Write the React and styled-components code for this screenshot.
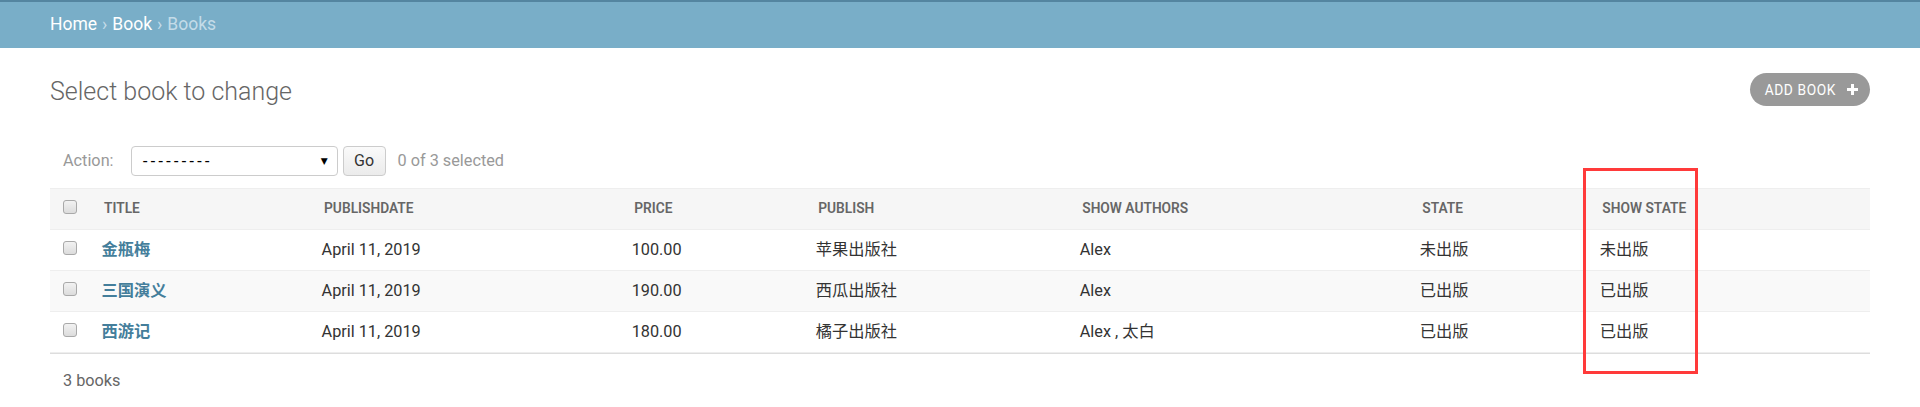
import React from "react";
import styled, { createGlobalStyle } from "styled-components";

const Global = createGlobalStyle`
  html, body { margin: 0; padding: 0; background: #fff; }
  body {
    font-family: Roboto, "Noto Sans CJK SC", "Lucida Grande", Verdana, Arial, sans-serif;
    font-size: 16.25px;
    color: #333;
  }
  * { box-sizing: border-box; }
`;

const Page = styled.div`
  position: relative;
  width: 1920px;
  min-height: 407px;
`;

const Breadcrumbs = styled.div`
  height: 48px;
  border-top: 2px solid #5485a0;
  background: #79aec8;
  padding: 0 50px;
  line-height: 45px;
  font-size: 17.5px;
  color: #c4dce8;
  display: flex;
  gap: 5px;
`;

const Crumb = styled.a`
  color: ${(p) => (p.$current ? "#c4dce8" : "#fff")};
  text-decoration: none;
`;

const Sep = styled.span`
  color: #c4dce8;
`;

const Content = styled.div`
  padding: 25px 50px 0;
`;

const TitleRow = styled.div`
  height: 60px;
  display: flex;
  justify-content: space-between;
  align-items: flex-start;
`;

const Title = styled.h1`
  margin: 0;
  font-size: 25px;
  line-height: 38px;
  font-weight: 300;
  color: #666;
`;

const AddButton = styled.a`
  display: flex;
  align-items: center;
  gap: 10px;
  height: 33px;
  padding: 0 11px 0 15px;
  border-radius: 17px;
  background: #999;
  color: #fff;
  font-size: 13.75px;
  letter-spacing: 0.6px;
  text-transform: uppercase;
  text-decoration: none;
`;

const Actions = styled.div`
  display: flex;
  align-items: center;
  padding: 12.5px 13px;
  height: 55px;
  color: #999;
`;

const ActionLabel = styled.label`
  font-size: 16.25px;
  margin-right: 17px;
`;

const FakeSelect = styled.div`
  width: 207px;
  height: 30px;
  border: 1px solid #ccc;
  border-radius: 4px;
  background: #fff;
  display: flex;
  align-items: center;
  justify-content: space-between;
  padding: 0 9px 0 11px;
  color: #000;
`;

const Dashes = styled.span`
  font-family: "Liberation Sans", Arial, sans-serif;
  font-size: 16px;
  letter-spacing: 2.4px;
`;

const Arrow = styled.span`
  font-family: "DejaVu Sans", sans-serif;
  font-size: 9px;
  color: #000;
`;

const GoButton = styled.button`
  margin-left: 5px;
  width: 43px;
  height: 30px;
  border: 1px solid #ccc;
  border-radius: 4px;
  background: linear-gradient(#fafafa, #ebebeb);
  font-family: Roboto, sans-serif;
  font-size: 16px;
  color: #333;
  padding: 0;
`;

const Counter = styled.span`
  margin-left: 12px;
  font-size: 16.25px;
  color: #999;
`;

const Table = styled.table`
  width: 1820px;
  border-collapse: collapse;
  table-layout: fixed;
`;

const Col = styled.col`
  width: ${(p) => p.$w}px;
`;

const HeadCell = styled.th`
  background: #f6f6f6;
  border-top: 1px solid #eee;
  border-bottom: 1px solid #eee;
  padding: 10px 12.5px;
  height: 41px;
  line-height: 19px;
  font-size: 13.75px;
  font-weight: 600;
  color: #666;
  text-align: ${(p) => (p.$center ? "center" : "left")};
  text-transform: uppercase;
  vertical-align: top;
  white-space: nowrap;
`;

const Row = styled.tr`
  background: ${(p) => (p.$alt ? "#f9f9f9" : "#fff")};
`;

const Cell = styled.td`
  padding: 10px;
  line-height: 20px;
  height: 41px;
  border-bottom: 1px solid #eee;
  font-size: 16.25px;
  color: #333;
  vertical-align: top;
  text-align: ${(p) => (p.$center ? "center" : "left")};
  white-space: nowrap;
`;

const RowHead = styled.th`
  padding: 10px;
  line-height: 20px;
  height: 41px;
  border-bottom: 1px solid #eee;
  font-size: 16.25px;
  font-weight: 600;
  text-align: left;
  vertical-align: top;
`;

const TitleLink = styled.a`
  color: #447e9b;
  text-decoration: none;
`;

const Check = styled.span`
  display: block;
  width: 14px;
  height: 14px;
  margin: 1px auto 0;
  border: 1px solid #a9a9a9;
  border-radius: 3px;
  background: linear-gradient(#f2f2f2, #dcdcdc);
  position: relative;
  left: -1px;
`;

const Paginator = styled.p`
  margin: 0;
  border-top: 1px solid #ddd;
  padding: 12.5px 13px;
  line-height: 27.5px;
  font-size: 16.25px;
  color: #666;
`;

const Annotation = styled.div`
  position: absolute;
  left: 1583px;
  top: 168px;
  width: 115px;
  height: 206px;
  border: 3px solid #ff3a3a;
  pointer-events: none;
`;

const PlusIcon = () => (
  <svg width="13" height="13" viewBox="0 0 13 13" aria-hidden="true">
    <path d="M6.5 1v11M1 6.5h11" stroke="#fff" strokeWidth="3" strokeLinecap="butt" />
  </svg>
);

const widths = [41.5, 220, 310, 184, 264, 340, 180, 280];
const headers = ["Title", "Publishdate", "Price", "Publish", "Show authors", "State", "Show state"];
const rows = [
  ["金瓶梅", "April 11, 2019", "100.00", "苹果出版社", "Alex", "未出版", "未出版"],
  ["三国演义", "April 11, 2019", "190.00", "西瓜出版社", "Alex", "已出版", "已出版"],
  ["西游记", "April 11, 2019", "180.00", "橘子出版社", "Alex , 太白", "已出版", "已出版"],
];

export default function App() {
  return (
    <Page>
      <Global />
      <Breadcrumbs>
        <Crumb href="#">Home</Crumb>
        <Sep>›</Sep>
        <Crumb href="#">Book</Crumb>
        <Sep>›</Sep>
        <Crumb $current>Books</Crumb>
      </Breadcrumbs>
      <Content>
        <TitleRow>
          <Title>Select book to change</Title>
          <AddButton href="#">
            Add book
            <PlusIcon />
          </AddButton>
        </TitleRow>
        <Actions>
          <ActionLabel>Action:</ActionLabel>
          <FakeSelect>
            <Dashes>---------</Dashes>
            <Arrow>▼</Arrow>
          </FakeSelect>
          <GoButton type="button">Go</GoButton>
          <Counter>0 of 3 selected</Counter>
        </Actions>
        <Table>
          <colgroup>
            {widths.map((w, i) => (
              <Col key={i} $w={w} />
            ))}
          </colgroup>
          <thead>
            <tr>
              <HeadCell $center>
                <Check />
              </HeadCell>
              {headers.map((h) => (
                <HeadCell key={h}>{h}</HeadCell>
              ))}
            </tr>
          </thead>
          <tbody>
            {rows.map((r, i) => (
              <Row key={i} $alt={i % 2 === 1}>
                <Cell $center>
                  <Check />
                </Cell>
                <RowHead>
                  <TitleLink href="#">{r[0]}</TitleLink>
                </RowHead>
                {r.slice(1).map((v, j) => (
                  <Cell key={j}>{v}</Cell>
                ))}
              </Row>
            ))}
          </tbody>
        </Table>
        <Paginator>3 books</Paginator>
      </Content>
      <Annotation />
    </Page>
  );
}
